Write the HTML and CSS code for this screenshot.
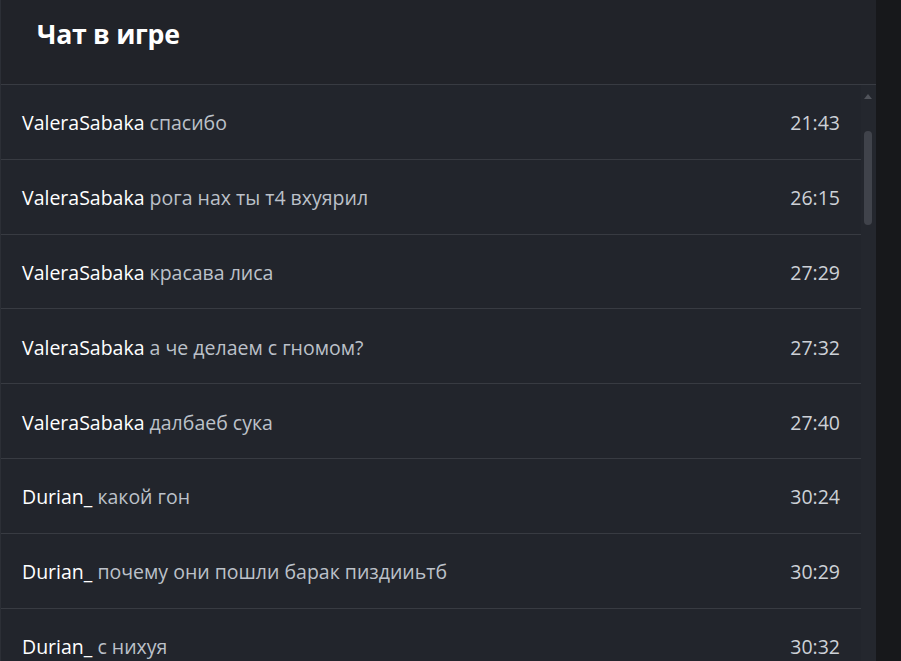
FILE: index.html
```html
<!DOCTYPE html>
<html lang="ru">
<head>
  <meta charset="UTF-8" />
  <meta name="viewport" content="width=device-width, initial-scale=1.0"/>
  <title>Чат в игре</title>
  <link rel="stylesheet" href="styles.css">
</head>
<body>
  <div class="chat-panel">
    <div class="chat-header">
      <h1>Чат в игре</h1>
    </div>
    <div class="chat-body">
      <div class="messages">
        <div class="msg"><span class="text"><b class="nick">ValeraSabaka</b> спасибо</span><span class="time">21:43</span></div>
        <div class="msg"><span class="text"><b class="nick">ValeraSabaka</b> рога нах ты т4 вхуярил</span><span class="time">26:15</span></div>
        <div class="msg"><span class="text"><b class="nick">ValeraSabaka</b> красава лиса</span><span class="time">27:29</span></div>
        <div class="msg"><span class="text"><b class="nick">ValeraSabaka</b> а че делаем с гномом?</span><span class="time">27:32</span></div>
        <div class="msg"><span class="text"><b class="nick">ValeraSabaka</b> далбаеб сука</span><span class="time">27:40</span></div>
        <div class="msg"><span class="text"><b class="nick">Durian_</b> какой гон</span><span class="time">30:24</span></div>
        <div class="msg"><span class="text"><b class="nick">Durian_</b> почему они пошли барак пиздииьтб</span><span class="time">30:29</span></div>
        <div class="msg"><span class="text"><b class="nick">Durian_</b> с нихуя</span><span class="time">30:32</span></div>
      </div>
      <div class="scrollbar">
        <div class="arrow-up"></div>
        <div class="thumb"></div>
      </div>
    </div>
  </div>
</body>
</html>
```

FILE: styles.css
```css
body {
  margin: 0;
  height: 661px;
  overflow: hidden;
  background: #17181b;
  font-family: 'Open Sans', 'Noto Sans', sans-serif;
  color: #fff;
}

.chat-panel {
  width: 875px;
  height: 661px;
  background: #22252c;
  border-left: 1px solid #2c2f36;
  display: flex;
  flex-direction: column;
}

.chat-header {
  height: 84px;
  border-bottom: 1px solid #383b42;
  padding-left: 36px;
  display: flex;
  align-items: center;
  background: #212329;
}

.chat-header h1 {
  margin: 0 0 17px;
  font-size: 26.7px;
  font-weight: 700;
  letter-spacing: -0.3px;
}

.chat-body {
  flex: 1;
  display: flex;
  overflow: hidden;
}

.messages {
  flex: 1;
}

.msg {
  height: 73.8px;
  border-bottom: 1px solid #383b42;
  display: flex;
  align-items: center;
  justify-content: space-between;
  padding: 2px 21px 0 21px;
  box-sizing: border-box;
  height: 74.8px;
  font-size: 19.5px;
}

.msg .text {
  color: #bcc1c9;
}

.msg .nick {
  font-weight: 400;
  color: #fff;
}

.msg .time {
  color: #cdd1d7;
}

.scrollbar {
  width: 15px;
  background: #24272e;
  position: relative;
}

.arrow-up {
  position: absolute;
  top: 9px;
  left: 3px;
  width: 0;
  height: 0;
  border-left: 4px solid transparent;
  border-right: 4px solid transparent;
  border-bottom: 5px solid #50535a;
}

.thumb {
  position: absolute;
  top: 46px;
  left: 3px;
  width: 8px;
  height: 94px;
  border-radius: 4px;
  background: #40434b;
}
```
